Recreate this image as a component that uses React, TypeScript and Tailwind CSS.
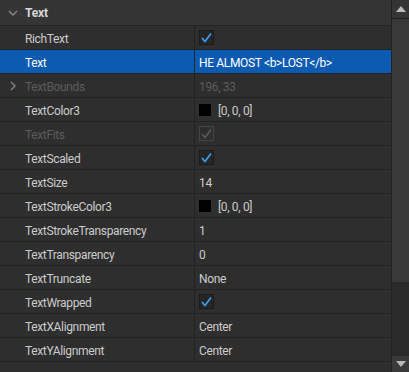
import React from "react";

type Row = {
  label: string;
  kind: "check" | "text" | "color";
  value?: string;
  disabled?: boolean;
  selected?: boolean;
  expand?: boolean;
};

const rows: Row[] = [
  { label: "RichText", kind: "check" },
  { label: "Text", kind: "text", value: "HE ALMOST <b>LOST</b>", selected: true },
  { label: "TextBounds", kind: "text", value: "196, 33", disabled: true, expand: true },
  { label: "TextColor3", kind: "color", value: "[0, 0, 0]" },
  { label: "TextFits", kind: "check", disabled: true },
  { label: "TextScaled", kind: "check" },
  { label: "TextSize", kind: "text", value: "14" },
  { label: "TextStrokeColor3", kind: "color", value: "[0, 0, 0]" },
  { label: "TextStrokeTransparency", kind: "text", value: "1" },
  { label: "TextTransparency", kind: "text", value: "0" },
  { label: "TextTruncate", kind: "text", value: "None" },
  { label: "TextWrapped", kind: "check" },
  { label: "TextXAlignment", kind: "text", value: "Center" },
  { label: "TextYAlignment", kind: "text", value: "Center" },
];

function Check({ disabled }: { disabled?: boolean }) {
  return (
    <div
      className={
        "w-[15px] h-[15px] border flex items-center justify-center " +
        (disabled ? "border-[#444444] bg-[#2e2e2e]" : "border-[#1a1a1a] bg-[#262626]")
      }
    >
      <svg width="13" height="13" viewBox="0 0 13 13">
        <path
          d="M2 7 L5 10.5 L11 2.5"
          fill="none"
          stroke={disabled ? "#5a5a5a" : "#3ba4f5"}
          strokeWidth="1.6"
        />
      </svg>
    </div>
  );
}

export default function App() {
  return (
    <div
      className="w-[409px] h-[372px] bg-[#2e2e2e] flex overflow-hidden text-[12px] tracking-[-0.35px]"
      style={{ fontFamily: "Roboto, 'Noto Sans', sans-serif" }}
    >
      <div className="w-[392px] flex flex-col border-r border-[#222222]">
        <div className="h-[26px] bg-[#353535] border-b border-[#222222] flex items-center shrink-0">
          <div className="w-[25px] flex justify-center pl-[1px]">
            <svg width="10" height="6" viewBox="0 0 10 6">
              <path d="M1 1 L5 5 L9 1" fill="none" stroke="#8a8a8a" strokeWidth="1.3" />
            </svg>
          </div>
          <span className="font-bold text-[#d6d6d6] text-[12px] tracking-[-0.2px] pt-[1px]">Text</span>
        </div>
        {rows.map((r) => (
          <div
            key={r.label}
            className={
              "h-[24px] flex border-b border-[#222222] shrink-0 " +
              (r.selected ? "bg-[#0b5bb3]" : "bg-[#2e2e2e]")
            }
          >
            <div className="w-[195px] border-r border-[#222222] flex items-center shrink-0">
              <div className="w-[25px] flex justify-center">
                {r.expand && (
                  <svg width="6" height="10" viewBox="0 0 6 10">
                    <path d="M1 1 L5 5 L1 9" fill="none" stroke="#8a8a8a" strokeWidth="1.3" />
                  </svg>
                )}
              </div>
              <span
                className={
                  "pt-[2px] " +
                  (r.selected
                    ? "text-white"
                    : r.disabled
                    ? "text-[#5c5c5c]"
                    : "text-[#cccccc]")
                }
              >
                {r.label}
              </span>
            </div>
            <div className="flex-1 flex items-center pl-[4px]">
              {r.kind === "check" && <Check disabled={r.disabled} />}
              {r.kind === "text" && (
                <span
                  className={
                    "pt-[2px] " +
                    (r.selected
                      ? "text-white"
                      : r.disabled
                      ? "text-[#5c5c5c]"
                      : "text-[#cccccc]")
                  }
                >
                  {r.value}
                </span>
              )}
              {r.kind === "color" && (
                <div className="flex items-center gap-[7px]">
                  <div className="w-[12px] h-[12px] bg-black" />
                  <span className="text-[#cccccc] pt-[2px]">{r.value}</span>
                </div>
              )}
            </div>
          </div>
        ))}
      </div>
      <div className="w-[17px] flex flex-col bg-[#2a2a2a]">
        <div className="h-[19px] bg-[#353535] border-b border-[#222222] flex items-center justify-center shrink-0">
          <svg width="10" height="6" viewBox="0 0 10 6">
            <path d="M0 6 L5 0 L10 6 Z" fill="#b8b8b8" />
          </svg>
        </div>
        <div className="h-[263px] bg-[#393939] shrink-0" />
        <div className="flex-1" />
        <div className="h-[16px] bg-[#3a3a3a] flex items-center justify-center shrink-0">
          <svg width="10" height="6" viewBox="0 0 10 6">
            <path d="M0 0 L5 6 L10 0 Z" fill="#b8b8b8" />
          </svg>
        </div>
      </div>
    </div>
  );
}
